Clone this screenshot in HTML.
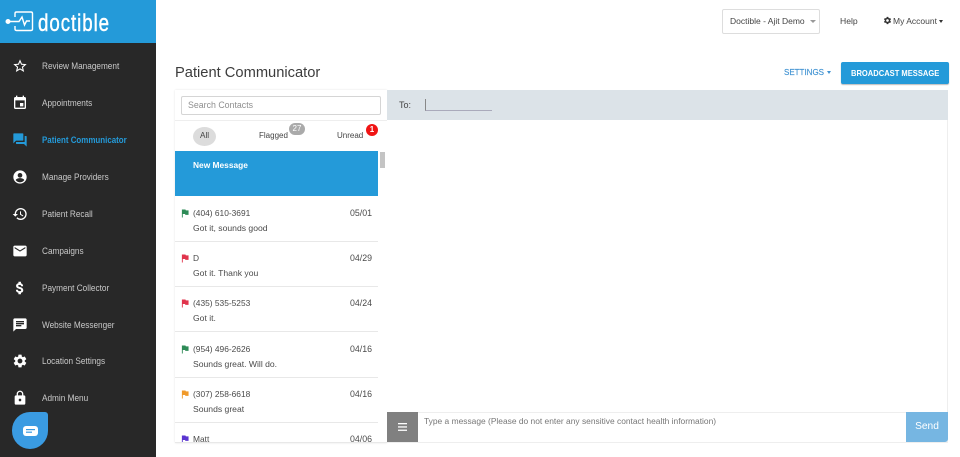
<!DOCTYPE html>
<html><head><meta charset="utf-8"><style>
html,body{margin:0;padding:0}
body{width:960px;height:457px;overflow:hidden;position:relative;background:#fff;font-family:"Liberation Sans",sans-serif;color:#444}
.a{position:absolute;white-space:nowrap}
#side{position:absolute;left:0;top:0;width:156px;height:457px;background:#282828}
#logo{position:absolute;left:0;top:0;width:156px;height:43px;background:#249ad9}
.n{position:absolute;left:42px;font-size:9.2px;line-height:12px;color:#c9c9c9;white-space:nowrap;transform:scaleX(.895);transform-origin:0 0}
.ic{position:absolute;left:12px;width:16px;height:16px;fill:#fff}
.row{position:absolute;left:175px;width:203px;height:44px;border-bottom:1px solid #e8e8e8;font-size:8.6px;color:#4a4a4a}
.row span{position:absolute;white-space:nowrap;line-height:12px}
.row span.h{font-size:8.4px}
.row span.d{font-size:8.8px}
.row svg{position:absolute;left:6px;top:12px;width:8px;height:9px}
</style></head><body>
<div id="side">
<div id="logo">
<svg style="position:absolute;left:5px;top:9px" width="30" height="25" viewBox="0 0 30 25" fill="none" stroke="#fff" stroke-width="1.4"><path d="M10 8V4.500Q10 3 11.500 3H26Q27.500 3 27.500 4.500V20Q27.500 21.500 26 21.500H11.500Q10 21.500 10 20V17"/><path d="M2 12.500H14L17 8L19.500 16L21.500 12H25"/><circle cx="3" cy="12.500" r="1.800" fill="#fff"/></svg>
<div class="a" style="left:38px;top:10px;font-size:24px;line-height:28px;color:#fff;transform:scaleX(.78);transform-origin:0 0;letter-spacing:1.200px;-webkit-text-stroke:.4px #fff">doctible</div>
</div>
<svg class="ic" style="top:58px" viewBox="0 0 24 24"><path d="M22 9.240l-7.190-.62L12 2 9.190 8.630 2 9.240l5.460 4.730L5.820 21 12 17.270 18.180 21l-1.630-7.030L22 9.240zM12 15.400l-3.760 2.270 1-4.280-3.320-2.880 4.380-.38L12 6.100l1.710 4.040 4.380.38-3.320 2.880 1 4.280L12 15.400z"/></svg>
<div class="n" style="top:60px">Review Management</div>
<svg class="ic" style="top:95px" viewBox="0 0 24 24"><path d="M17 12h-5v5h5v-5zM16 1v2H8V1H6v2H5C3.900 3 3 3.900 3 5v14c0 1.100.9 2 2 2h14c1.100 0 2-.9 2-2V5c0-1.100-.9-2-2-2h-1V1h-2zm3 18H5V8h14v11z"/></svg>
<div class="n" style="top:97px">Appointments</div>
<svg class="ic" style="top:132px;fill:#249ad9" viewBox="0 0 24 24"><path d="M21 6h-2v9H6v2c0 .55.45 1 1 1h11l4 4V7c0-.55-.45-1-1-1zm-4 6V3c0-.55-.45-1-1-1H3c-.55 0-1 .45-1 1v14l4-4h10c.55 0 1-.45 1-1z"/></svg>
<div class="n" style="top:134px;color:#249ad9;font-weight:bold;font-size:8.900px">Patient Communicator</div>
<svg class="ic" style="top:169px" viewBox="0 0 24 24"><path d="M12 2C6.480 2 2 6.480 2 12s4.480 10 10 10 10-4.480 10-10S17.520 2 12 2zm0 4a3.500 3.500 0 1 1 0 7 3.500 3.500 0 0 1 0-7zm0 14c-2.700 0-5-1.300-6.400-3.300.1-2 4.300-3.100 6.400-3.100s6.300 1.100 6.400 3.100C17 18.700 14.700 20 12 20z"/></svg>
<div class="n" style="top:171px">Manage Providers</div>
<svg class="ic" style="top:206px" viewBox="0 0 24 24"><path d="M13 3a9 9 0 0 0-9 9H1l3.890 3.890.07.14L9 12H6c0-3.870 3.130-7 7-7s7 3.130 7 7-3.130 7-7 7c-1.930 0-3.680-.79-4.940-2.060l-1.420 1.420A8.954 8.954 0 0 0 13 21a9 9 0 0 0 0-18zm-1 5v5l4.280 2.540.72-1.210-3.500-2.080V8H12z"/></svg>
<div class="n" style="top:208px">Patient Recall</div>
<svg class="ic" style="top:243px" viewBox="0 0 24 24"><path d="M20 4H4c-1.100 0-2 .9-2 2v12c0 1.100.9 2 2 2h16c1.100 0 2-.9 2-2V6c0-1.100-.9-2-2-2zm0 4l-8 5-8-5V6l8 5 8-5v2z"/></svg>
<div class="n" style="top:245px">Campaigns</div>
<svg class="ic" style="top:280px;stroke:#fff;stroke-width:.8" viewBox="0 0 24 24"><path d="M11.800 10.900c-2.270-.59-3-1.200-3-2.150 0-1.090 1.010-1.850 2.700-1.850 1.780 0 2.440.85 2.500 2.100h2.210c-.07-1.720-1.120-3.300-3.210-3.810V3h-3v2.160c-1.940.42-3.500 1.680-3.500 3.610 0 2.310 1.910 3.460 4.700 4.130 2.500.6 3 1.480 3 2.410 0 .69-.49 1.790-2.700 1.790-2.060 0-2.870-.92-2.980-2.100h-2.200c.12 2.190 1.760 3.420 3.680 3.830V21h3v-2.150c1.950-.37 3.500-1.500 3.500-3.550 0-2.840-2.430-3.810-4.700-4.400z"/></svg>
<div class="n" style="top:282px">Payment Collector</div>
<svg class="ic" style="top:317px" viewBox="0 0 24 24"><path d="M20 2H4c-1.100 0-2 .9-2 2v18l4-4h14c1.100 0 2-.9 2-2V4c0-1.100-.9-2-2-2zM6 9h12v2H6V9zm8 5H6v-2h8v2zm4-6H6V6h12v2z"/></svg>
<div class="n" style="top:319px">Website Messenger</div>
<svg class="ic" style="top:353px" viewBox="0 0 24 24"><path d="M19.140 12.940c.04-.3.060-.61.060-.94 0-.32-.02-.64-.07-.94l2.030-1.580a.49.49 0 0 0 .12-.61l-1.920-3.320a.488.488 0 0 0-.59-.22l-2.390.96c-.5-.38-1.030-.7-1.620-.94l-.36-2.540a.484.484 0 0 0-.48-.41h-3.840c-.24 0-.43.17-.47.41l-.36 2.540c-.59.24-1.130.57-1.620.94l-2.390-.96c-.22-.08-.47 0-.59.22L2.740 8.870c-.12.21-.08.47.12.61l2.030 1.580c-.05.3-.09.63-.09.94s.02.64.07.94l-2.030 1.580a.49.49 0 0 0-.12.61l1.920 3.320c.12.22.37.29.59.22l2.390-.96c.5.38 1.030.7 1.620.94l.36 2.540c.05.24.24.41.48.41h3.840c.24 0 .44-.17.47-.41l.36-2.540c.59-.24 1.130-.56 1.620-.94l2.390.96c.22.08.47 0 .59-.22l1.920-3.320c.12-.22.07-.47-.12-.61l-2.010-1.580zM12 15.600c-1.980 0-3.600-1.620-3.600-3.600s1.620-3.600 3.600-3.600 3.600 1.620 3.600 3.600-1.620 3.600-3.600 3.600z"/></svg>
<div class="n" style="top:355px">Location Settings</div>
<svg class="ic" style="top:390px" viewBox="0 0 24 24"><path d="M18 8h-1V6c0-2.760-2.240-5-5-5S7 3.240 7 6v2H6c-1.100 0-2 .9-2 2v10c0 1.100.9 2 2 2h12c1.100 0 2-.9 2-2V10c0-1.100-.9-2-2-2zm-6 9c-1.100 0-2-.9-2-2s.9-2 2-2 2 .9 2 2-.9 2-2 2zm3.100-9H8.900V6c0-1.710 1.390-3.100 3.100-3.100s3.100 1.390 3.100 3.100v2z"/></svg>
<div class="n" style="top:392px">Admin Menu</div>
<div style="position:absolute;left:11.500px;top:412px;width:36.500px;height:37px;background:#3a9be2;border-radius:50% 3px 50% 50%"></div>
<svg style="position:absolute;left:23px;top:426px" width="15" height="10" viewBox="0 0 15 10"><rect x="0" y="0" width="15" height="10" rx="3" fill="#fff"/><rect x="3" y="3" width="9" height="1.200" fill="#3a9be2"/><rect x="3" y="5.600" width="6" height="1.200" fill="#3a9be2"/></svg>
</div>

<div class="a" style="left:722px;top:9px;width:96px;height:23px;border:1px solid #ddd;border-radius:2px"></div>
<div class="a" style="left:730px;top:15px;font-size:8.500px;line-height:12px;color:#444">Doctible - Ajit Demo</div>
<div class="a" style="left:810px;top:20px;border:3px solid transparent;border-top:3px solid #999;border-bottom:0"></div>
<div class="a" style="left:840px;top:15px;font-size:8.600px;line-height:12px;color:#444">Help</div>
<svg class="a" style="left:883px;top:16px" width="9" height="9" viewBox="0 0 24 24" fill="#333"><path d="M19.140 12.940c.04-.3.060-.61.060-.94 0-.32-.02-.64-.07-.94l2.030-1.580a.49.49 0 0 0 .12-.61l-1.920-3.320a.488.488 0 0 0-.59-.22l-2.390.96c-.5-.38-1.030-.7-1.620-.94l-.36-2.540a.484.484 0 0 0-.48-.41h-3.840c-.24 0-.43.17-.47.41l-.36 2.540c-.59.24-1.130.57-1.620.94l-2.390-.96c-.22-.08-.47 0-.59.22L2.740 8.870c-.12.21-.08.47.12.61l2.030 1.580c-.05.3-.09.63-.09.94s.02.64.07.94l-2.030 1.580a.49.49 0 0 0-.12.61l1.920 3.320c.12.22.37.29.59.22l2.390-.96c.5.38 1.030.7 1.620.94l.36 2.540c.05.24.24.41.48.41h3.840c.24 0 .44-.17.47-.41l.36-2.540c.59-.24 1.130-.56 1.620-.94l2.390.96c.22.08.47 0 .59-.22l1.920-3.320c.12-.22.07-.47-.12-.61l-2.010-1.580zM12 15.600c-1.980 0-3.600-1.620-3.600-3.600s1.620-3.600 3.600-3.600 3.600 1.620 3.600 3.600-1.620 3.600-3.600 3.600z"/></svg>
<div class="a" style="left:893px;top:15px;font-size:8.500px;line-height:12px;color:#444">My Account</div>
<div class="a" style="left:939px;top:20px;border:2.500px solid transparent;border-top:3px solid #333;border-bottom:0"></div>

<div class="a" style="left:175px;top:63px;font-size:14.700px;line-height:20px;color:#3c3c3c">Patient Communicator</div>
<div class="a" style="left:784px;top:67px;font-size:8px;line-height:12px;color:#3f92d2;-webkit-text-stroke:.15px #3f92d2">SETTINGS</div>
<div class="a" style="left:827px;top:71px;border:2.500px solid transparent;border-top:3px solid #3f92d2;border-bottom:0"></div>
<div class="a" style="left:841px;top:62px;width:108px;height:22px;background:#249ad9;border-radius:2px;box-shadow:0 1px 1px #bbb"></div>
<div class="a" style="left:851px;top:62px;color:#fff;font-size:8.500px;font-weight:bold;line-height:22px;transform:scaleX(.89);transform-origin:0 0">BROADCAST MESSAGE</div>

<div class="a" style="left:175px;top:90px;width:212px;height:353px;background:#fff;box-shadow:0 0 2px #e4e4e4"></div>
<div class="a" style="left:181px;top:96px;width:198px;height:17px;border:1px solid #d5d5d5;border-radius:2px;background:#fff"></div>
<div class="a" style="left:188px;top:99px;font-size:8.800px;line-height:12px;color:#8f8f8f">Search Contacts</div>
<div class="a" style="left:175px;top:120px;width:212px;height:1px;background:#eee"></div>
<div class="a" style="left:193px;top:127px;width:23px;height:19px;border-radius:50%;background:#dcdcdc"></div>
<div class="a" style="left:200px;top:130px;font-size:8.200px;line-height:12px;color:#444">All</div>
<div class="a" style="left:259px;top:130px;font-size:8px;line-height:12px;color:#444">Flagged</div>
<div class="a" style="left:289px;top:123px;width:16px;height:12px;border-radius:6px;background:#aaa;color:#fff;font-size:8px;line-height:12px;text-align:center">27</div>
<div class="a" style="left:337px;top:130px;font-size:8px;line-height:12px;color:#444">Unread</div>
<div class="a" style="left:366px;top:124px;width:12px;height:12px;border-radius:50%;background:#f01414;color:#fff;font-size:8px;font-weight:bold;line-height:12px;text-align:center">1</div>

<div class="a" style="left:175px;top:151px;width:203px;height:45px;background:#249ad9;color:#fff;font-size:8.400px;font-weight:bold"><span class="a" style="left:18px;top:8px;line-height:12px">New Message</span></div>
<div class="a" style="left:380px;top:152px;width:5px;height:16px;background:#c4c4c4"></div>

<div class="a" style="left:175px;top:197px;width:203px;height:245px;overflow:hidden">
<div class="row" style="left:0;top:0"><svg viewBox="0 0 9 9"><path d="M1 0.500V9H2V5H4.500L5 6H8.500V1H5.500L5 0H1z" fill="#2e8b57"/></svg><span class="h" style="left:18px;top:10px">(404) 610-3691</span><span class="d" style="right:6px;top:10px">05/01</span><span style="left:18px;top:25px">Got it, sounds good</span></div>
<div class="row" style="left:0;top:45px"><svg viewBox="0 0 9 9"><path d="M1 0.500V9H2V5H4.500L5 6H8.500V1H5.500L5 0H1z" fill="#e0344c"/></svg><span class="h" style="left:18px;top:10px">D</span><span class="d" style="right:6px;top:10px">04/29</span><span style="left:18px;top:25px">Got it. Thank you</span></div>
<div class="row" style="left:0;top:90px"><svg viewBox="0 0 9 9"><path d="M1 0.500V9H2V5H4.500L5 6H8.500V1H5.500L5 0H1z" fill="#e0344c"/></svg><span class="h" style="left:18px;top:10px">(435) 535-5253</span><span class="d" style="right:6px;top:10px">04/24</span><span style="left:18px;top:25px">Got it.</span></div>
<div class="row" style="left:0;top:136px"><svg viewBox="0 0 9 9"><path d="M1 0.500V9H2V5H4.500L5 6H8.500V1H5.500L5 0H1z" fill="#2e8b57"/></svg><span class="h" style="left:18px;top:10px">(954) 496-2626</span><span class="d" style="right:6px;top:10px">04/16</span><span style="left:18px;top:25px">Sounds great. Will do.</span></div>
<div class="row" style="left:0;top:181px"><svg viewBox="0 0 9 9"><path d="M1 0.500V9H2V5H4.500L5 6H8.500V1H5.500L5 0H1z" fill="#f09a2a"/></svg><span class="h" style="left:18px;top:10px">(307) 258-6618</span><span class="d" style="right:6px;top:10px">04/16</span><span style="left:18px;top:25px">Sounds great</span></div>
<div class="row" style="left:0;top:226px"><svg viewBox="0 0 9 9"><path d="M1 0.500V9H2V5H4.500L5 6H8.500V1H5.500L5 0H1z" fill="#5a35d0"/></svg><span class="h" style="left:18px;top:10px">Matt</span><span class="d" style="right:6px;top:10px">04/06</span></div>
</div>
<div class="a" style="left:175px;top:442px;width:212px;height:1px;background:#e8e8e8"></div>

<div class="a" style="left:387px;top:90px;width:561px;height:30px;background:#dce3e8"></div>
<div class="a" style="left:399px;top:99px;font-size:9px;line-height:12px;color:#444">To:</div>
<div class="a" style="left:425px;top:99px;width:66px;height:11px;border-left:1px solid #888;border-bottom:1px solid #aab"></div>
<div class="a" style="left:387px;top:120px;width:561px;height:323px;box-sizing:border-box;border-right:1px solid #eee;background:#fff"></div>
<div class="a" style="left:387px;top:412px;width:561px;height:1px;background:#eee"></div>
<div class="a" style="left:387px;top:442px;width:561px;height:1px;background:#eee"></div>
<div class="a" style="left:387px;top:412px;width:31px;height:30px;background:#808080"></div>
<svg class="a" style="left:398px;top:423px" width="9" height="8" viewBox="0 0 9 8" fill="#fff"><rect width="9" height="1.300"/><rect y="3.300" width="9" height="1.300"/><rect y="6.600" width="9" height="1.300"/></svg>
<div class="a" style="left:424px;top:415px;font-size:8.420px;line-height:12px;color:#777">Type a message (Please do not enter any sensitive contact health information)</div>
<div class="a" style="left:906px;top:412px;width:42px;height:30px;background:#76b6e2;color:#fff;font-size:10.200px;line-height:30px;text-align:center;border-radius:0 0 3px 0">Send</div>
</body></html>
